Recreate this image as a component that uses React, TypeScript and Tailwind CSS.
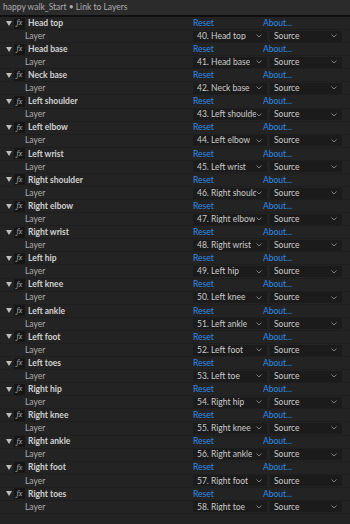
const effects = [
  ["Head top", "40. Head top"],
  ["Head base", "41. Head base"],
  ["Neck base", "42. Neck base"],
  ["Left shoulder", "43. Left shoulder"],
  ["Left elbow", "44. Left elbow"],
  ["Left wrist", "45. Left wrist"],
  ["Right shoulder", "46. Right shoulder"],
  ["Right elbow", "47. Right elbow"],
  ["Right wrist", "48. Right wrist"],
  ["Left hip", "49. Left hip"],
  ["Left knee", "50. Left knee"],
  ["Left ankle", "51. Left ankle"],
  ["Left foot", "52. Left foot"],
  ["Left toes", "53. Left toe"],
  ["Right hip", "54. Right hip"],
  ["Right knee", "55. Right knee"],
  ["Right ankle", "56. Right ankle"],
  ["Right foot", "57. Right foot"],
  ["Right toes", "58. Right toe"],
];

function Chevron() {
  return (
    <svg width="6" height="4" viewBox="0 0 6 4" className="shrink-0">
      <path d="M0.5 0.5 L3 3 L5.5 0.5" fill="none" stroke="#8a8a8a" strokeWidth="0.9" />
    </svg>
  );
}

function Select({ label, w }: { label: string; w: string }) {
  return (
    <div className={`flex h-[11px] items-center justify-between bg-[#1b1b1b] pl-[4px] pr-[5px] ${w}`}>
      <span className="overflow-hidden whitespace-nowrap text-[#cccccc]">{label}</span>
      <Chevron />
    </div>
  );
}

export default function App() {
  return (
    <div className="h-[524px] w-[350px] overflow-hidden bg-[#232323] text-[8.5px] leading-none text-[#b4b4b4]" style={{ fontFamily: 'Lato, "Noto Sans", sans-serif' }}>
      <div className="flex h-[17px] items-center border-b-2 border-[#0f0f0f] bg-[#2b2b2b] pl-[3px] text-[#ababab]">
        happy walk_Start • Link to Layers
      </div>

      <div className="grid h-[497px] grid-rows-[repeat(38,minmax(0,1fr))]">
        {effects.map(([name, layer]) => [
          <div key={name} className="flex items-center border-b border-[#1e1e1e]">
            <span className="ml-[4px] flex w-[9px] justify-center">
              <svg width="6" height="5" viewBox="0 0 6 5">
                <path d="M0 0 H6 L3 5 Z" fill="#bdbdbd" />
              </svg>
            </span>
            <span className="ml-[1px] flex h-[11px] w-[11px] items-center justify-center bg-[#161616] font-serif text-[8px] italic text-[#a0a0a0]">fx</span>
            <span className="ml-[3px] w-[165px] font-bold text-[#d2d2d2]">{name}</span>
            <span className="w-[70px] text-[#2f8be6]">Reset</span>
            <span className="text-[#2f8be6]">About...</span>
          </div>,
          <div key={name + "-layer"} className="flex items-center border-b border-[#1e1e1e]">
            <span className="ml-[25px] w-[168px] text-[#adadad]">Layer</span>
            <Select label={layer} w="w-[74px]" />
            <div className="w-[3px]" />
            <Select label="Source" w="w-[72px]" />
          </div>,
        ])}
      </div>
    </div>
  );
}
